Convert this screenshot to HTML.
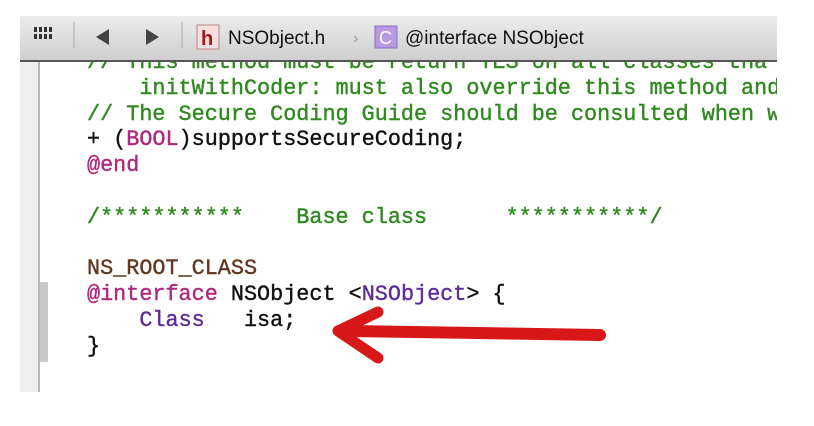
<!DOCTYPE html>
<html><head><meta charset="utf-8"><style>
body{margin:0;width:814px;height:426px;background:#fff;position:relative;overflow:hidden;font-family:"Liberation Sans",sans-serif}
.panel{position:absolute;left:20px;top:16px;width:757px;height:376px;background:#fff;overflow:hidden}
.bar{position:absolute;left:0;top:0;width:757px;height:44px;background:linear-gradient(#ececec,#cfcfcf);border-bottom:2px solid #555;z-index:2}
.gut{position:absolute;left:0;top:0;width:18px;height:376px;background:#eeeeee;border-right:2px solid #b5b5b5}
.gut2{position:absolute;left:20px;top:266px;width:8px;height:80px;background:#c8c8c8}
.code{position:absolute;left:67px;top:34px;font-family:"Liberation Mono",monospace;font-size:21.8px;line-height:25.8px;white-space:pre;color:#111;-webkit-text-stroke:0.4px}
.c{color:#2f8a1e}.k{color:#b0287e}.t{color:#5d2d9a}.m{color:#643820}
</style></head><body>
<div class="panel">
<div class="gut"></div><div class="gut2"></div>
<div class="code"><span class="c">// This method must be return YES on all classes tha
    initWithCoder: must also override this method and
// The Secure Coding Guide should be consulted when w</span>
+ (<span class="k">BOOL</span>)supportsSecureCoding;
<span class="k">@end</span>

<span class="c">/***********    Base class      ***********/</span>

<span class="m">NS_ROOT_CLASS</span>
<span class="k">@interface</span> NSObject &lt;<span class="t">NSObject</span>&gt; {
    <span class="t">Class</span>   isa;
}

  . .  ..  .</div>
<div class="bar"></div>
</div>
<svg style="position:absolute;left:0;top:0;z-index:3" width="814" height="426">
<g fill="#333"><rect x="34" y="27" width="3" height="5"/><rect x="39" y="27" width="3" height="5"/><rect x="44" y="27" width="3" height="5"/><rect x="49" y="27" width="3" height="5"/><rect x="34" y="34" width="3" height="5"/><rect x="39" y="34" width="3" height="5"/><rect x="44" y="34" width="3" height="5"/><rect x="49" y="34" width="3" height="5"/></g>
<line x1="74" y1="22" x2="74" y2="48" stroke="#aaa"/>
<polygon points="96,37 109,29 109,45" fill="#444"/>
<polygon points="146,29 146,45 159,37" fill="#444"/>
<line x1="182" y1="22" x2="182" y2="48" stroke="#aaa"/>
<rect x="197" y="25" width="22" height="24" fill="#f6dede" stroke="#b88"/>
<text x="201" y="45" font-family="Liberation Sans" font-weight="bold" font-size="20" fill="#a01818">h</text>
<text x="228" y="44" font-family="Liberation Sans" font-size="19" fill="#111">NSObject.h</text>
<text x="353" y="43" font-family="Liberation Sans" font-size="16" fill="#999">›</text>
<rect x="375" y="26" width="22" height="22" fill="#b89ae0" stroke="#8a6fc0"/>
<text x="379" y="44" font-family="Liberation Sans" font-size="18" fill="#fff">C</text>
<text x="405" y="44" font-family="Liberation Sans" font-size="19" fill="#111">@interface NSObject</text>
<path d="M600 335 L350 331" stroke="#d81818" stroke-width="12" stroke-linecap="round" fill="none"/>
<path d="M378 312 L338 331 L378 358" stroke="#d81818" stroke-width="11" stroke-linecap="round" stroke-linejoin="round" fill="none"/>
</svg>
</body></html>
